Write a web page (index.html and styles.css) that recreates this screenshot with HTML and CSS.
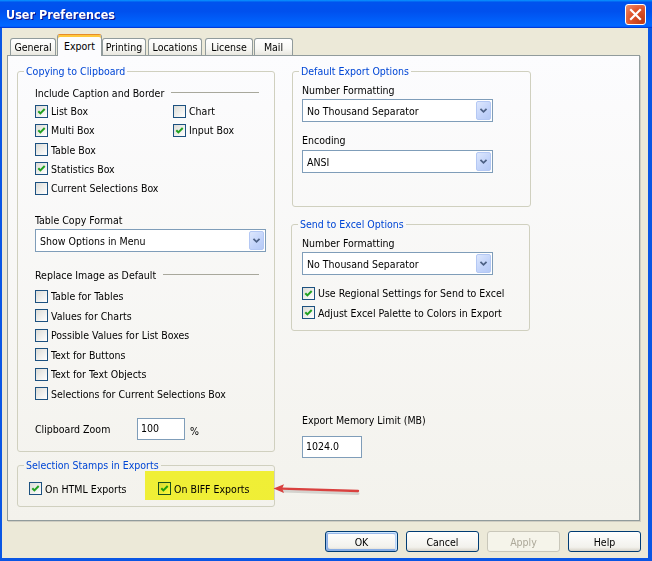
FILE: index.html
```html
<!DOCTYPE html>
<html>
<head>
<meta charset="utf-8">
<title>User Preferences</title>
<link rel="stylesheet" href="styles.css">
</head>
<body>
<div class="window">
  <div class="titlebar">
    <span class="title">User Preferences</span>
    <span class="close"><svg width="19" height="19" viewBox="0 0 19 19"><path d="M5 5 L14 14 M14 5 L5 14" stroke="#fff" stroke-width="2.2" stroke-linecap="square"/></svg></span>
  </div>
  <div class="client">
    <div class="tabs">
      <div class="tab t-general">General</div>
      <div class="tab tab-active t-export">Export</div>
      <div class="tab t-printing">Printing</div>
      <div class="tab t-locations">Locations</div>
      <div class="tab t-license">License</div>
      <div class="tab t-mail">Mail</div>
    </div>
    <div class="panel">
      <div class="col-left">
        <fieldset class="group">
          <legend>Copying to Clipboard</legend>
          <div class="gbody gb-clip">
            <div class="heading"><span>Include Caption and Border</span><span class="rule"></span></div>
            <div class="grid grid-caption">
              <div class="cb"><span class="box"><svg width="11" height="11" viewBox="0 0 11 11"><path d="M2.3 5.2 L4.4 7.4 L8.7 3" fill="none" stroke="#21a121" stroke-width="2"/></svg></span><span>List Box</span></div>
              <div class="cb"><span class="box"></span><span>Chart</span></div>
              <div class="cb"><span class="box"><svg width="11" height="11" viewBox="0 0 11 11"><path d="M2.3 5.2 L4.4 7.4 L8.7 3" fill="none" stroke="#21a121" stroke-width="2"/></svg></span><span>Multi Box</span></div>
              <div class="cb"><span class="box"><svg width="11" height="11" viewBox="0 0 11 11"><path d="M2.3 5.2 L4.4 7.4 L8.7 3" fill="none" stroke="#21a121" stroke-width="2"/></svg></span><span>Input Box</span></div>
              <div class="cb span2"><span class="box"></span><span>Table Box</span></div>
              <div class="cb span2"><span class="box"><svg width="11" height="11" viewBox="0 0 11 11"><path d="M2.3 5.2 L4.4 7.4 L8.7 3" fill="none" stroke="#21a121" stroke-width="2"/></svg></span><span>Statistics Box</span></div>
              <div class="cb span2"><span class="box"></span><span>Current Selections Box</span></div>
            </div>
            <div class="label lbl-copy">Table Copy Format</div>
            <div class="select sel-copy"><span>Show Options in Menu</span><span class="drop"><svg width="15" height="19" viewBox="0 0 15 19"><path d="M4 7.5 L7.5 11 L11 7.5" fill="none" stroke="#4d6185" stroke-width="2"/></svg></span></div>
            <div class="heading hd-replace"><span>Replace Image as Default</span><span class="rule"></span></div>
            <div class="grid grid-replace">
              <div class="cb"><span class="box"></span><span>Table for Tables</span></div>
              <div class="cb"><span class="box"></span><span>Values for Charts</span></div>
              <div class="cb"><span class="box"></span><span>Possible Values for List Boxes</span></div>
              <div class="cb"><span class="box"></span><span>Text for Buttons</span></div>
              <div class="cb"><span class="box"></span><span>Text for Text Objects</span></div>
              <div class="cb"><span class="box"></span><span>Selections for Current Selections Box</span></div>
            </div>
            <div class="zoomrow">
              <span class="zoomlbl">Clipboard Zoom</span>
              <span class="tb tb-zoom">100</span>
              <span class="pct">%</span>
            </div>
          </div>
        </fieldset>
        <fieldset class="group g-stamp">
          <legend>Selection Stamps in Exports</legend>
          <div class="gbody gb-stamp">
            <div class="grid grid-stamp">
              <div class="cb"><span class="box"><svg width="11" height="11" viewBox="0 0 11 11"><path d="M2.3 5.2 L4.4 7.4 L8.7 3" fill="none" stroke="#21a121" stroke-width="2"/></svg></span><span>On HTML Exports</span></div>
              <div class="cb"><span class="box"><svg width="11" height="11" viewBox="0 0 11 11"><path d="M2.3 5.2 L4.4 7.4 L8.7 3" fill="none" stroke="#21a121" stroke-width="2"/></svg></span><span>On BIFF Exports</span></div>
            </div>
          </div>
        </fieldset>
      </div>
      <div class="col-right">
        <fieldset class="group g-deo">
          <legend>Default Export Options</legend>
          <div class="gbody gb-deo">
            <div class="label">Number Formatting</div>
            <div class="select sel-r"><span>No Thousand Separator</span><span class="drop"><svg width="15" height="19" viewBox="0 0 15 19"><path d="M4 7.5 L7.5 11 L11 7.5" fill="none" stroke="#4d6185" stroke-width="2"/></svg></span></div>
            <div class="label lbl-enc">Encoding</div>
            <div class="select sel-r sel-enc"><span>ANSI</span><span class="drop"><svg width="15" height="19" viewBox="0 0 15 19"><path d="M4 7.5 L7.5 11 L11 7.5" fill="none" stroke="#4d6185" stroke-width="2"/></svg></span></div>
          </div>
        </fieldset>
        <fieldset class="group g-ste">
          <legend>Send to Excel Options</legend>
          <div class="gbody gb-ste">
            <div class="label">Number Formatting</div>
            <div class="select sel-r"><span>No Thousand Separator</span><span class="drop"><svg width="15" height="19" viewBox="0 0 15 19"><path d="M4 7.5 L7.5 11 L11 7.5" fill="none" stroke="#4d6185" stroke-width="2"/></svg></span></div>
            <div class="grid grid-ste">
              <div class="cb"><span class="box"><svg width="11" height="11" viewBox="0 0 11 11"><path d="M2.3 5.2 L4.4 7.4 L8.7 3" fill="none" stroke="#21a121" stroke-width="2"/></svg></span><span>Use Regional Settings for Send to Excel</span></div>
              <div class="cb"><span class="box"><svg width="11" height="11" viewBox="0 0 11 11"><path d="M2.3 5.2 L4.4 7.4 L8.7 3" fill="none" stroke="#21a121" stroke-width="2"/></svg></span><span>Adjust Excel Palette to Colors in Export</span></div>
            </div>
          </div>
        </fieldset>
        <div class="label lbl-mem">Export Memory Limit (MB)</div>
        <span class="tb tb-mem">1024.0</span>
      </div>
      <div class="highlight"></div>
      <svg class="arrow" width="100" height="16" viewBox="0 0 100 16">
        <path d="M13 11 L88 13.4" stroke="#000" stroke-opacity=".13" stroke-width="3" stroke-linecap="round"/>
        <path d="M12 8.6 L88 11" stroke="#d9413f" stroke-width="2.4" stroke-linecap="round"/>
        <path d="M3.5 8.5 L14 4.2 L12.2 8.6 L14 12.9 Z" fill="#d9413f"/>
      </svg>
    </div>
    <div class="buttons">
      <div class="btn btn-default">OK</div>
      <div class="btn">Cancel</div>
      <div class="btn btn-disabled">Apply</div>
      <div class="btn">Help</div>
    </div>
  </div>
</div>
</body>
</html>
```

FILE: styles.css
```css
* { box-sizing: border-box; }
html, body { margin: 0; padding: 0; }
body {
  width: 652px;
  height: 561px;
  overflow: hidden;
  font-family: "DejaVu Sans Condensed", "Liberation Sans", Arial, sans-serif;
  font-size: 10.5px;
  color: #000;
  background: #ece9d8;
}
.window {
  width: 652px;
  height: 561px;
  display: flex;
  flex-direction: column;
  background: #ece9d8;
}
.titlebar {
  height: 28px;
  flex: none;
  display: flex;
  align-items: center;
  justify-content: space-between;
  padding: 0 6px 0 6px;
  background: linear-gradient(180deg, #0997ff, #0053ee 8%, #0050ee 40%, #0066ff 88%, #0066ff 93%, #005bff 95%, #003dd7 96%, #003dd7);
}
.title {
  color: #fff;
  font-size: 12.5px;
  font-weight: bold;
  text-shadow: 1px 1px 0 #0f1089;
}
.close {
  width: 21px;
  height: 21px;
  border: 1px solid #fff;
  border-radius: 3px;
  background: radial-gradient(circle at 85% 85%, #c13c16 0%, #e0552c 55%, #ec8766 92%, #f7b9a3 100%);
  display: flex;
  align-items: center;
  justify-content: center;
}
.client {
  flex: 1;
  display: flex;
  flex-direction: column;
  border-style: solid;
  border-color: #0a56e4;
  border-width: 0 4px 3px 2px;
  padding: 6px 8px 0 5px;
}
.tabs {
  height: 21px;
  flex: none;
  display: flex;
  align-items: flex-end;
  padding-left: 3px;
}
.tab {
  height: 17px;
  display: flex;
  align-items: center;
  justify-content: center;
  white-space: nowrap;
  border: 1px solid #919b9c;
  border-bottom: 0;
  border-radius: 3px 3px 0 0;
  background: linear-gradient(#ffffff, #f7f7f4 60%, #e9e7df);
}
.tab-active {
  height: 22px;
  margin-bottom: -1px;
  position: relative;
  z-index: 1;
  background: #fcfcfe;
  border-top: 1px solid #e68b2c;
  box-shadow: inset 0 2px 0 #ffc83c;
}
.t-general { width: 46px; margin-right: 1px; }
.t-export { width: 45px; }
.t-printing { width: 44px; margin-right: 2px; }
.t-locations { width: 54px; margin-right: 3px; }
.t-license { width: 48px; margin-right: 1px; }
.t-mail { width: 39px; }

.panel {
  height: 466px;
  flex: none;
  position: relative;
  display: flex;
  border: 1px solid #919b9c;
  box-shadow: 1px 1px 0 #cfcdc2;
  background: linear-gradient(#fcfcfe, #f3f2ec);
  padding: 9px 0 0 9px;
}
.col-left { width: 258px; display: flex; flex-direction: column; }
.col-right { width: 240px; margin-left: 16px; display: flex; flex-direction: column; }

.group {
  margin: 0;
  padding: 0;
  min-width: 0;
  border: 1px solid #d0d0bf;
  border-radius: 3px;
}
.group legend {
  margin-left: 6px;
  padding: 0 2px;
  line-height: 13px;
  height: 13px;
  color: #0046d5;
}
.gb-clip { padding: 7px 15px 11px 17px; }
.g-stamp { margin-top: 7px; }
.gb-stamp { padding: 6.9px 0 8px 11px; }
.g-deo { margin-left: 1px; width: 239px; }
.gb-deo { padding: 5px 0 33px 9px; }
.g-ste { margin-top: 11px; width: 239px; }
.gb-ste { padding: 5.3px 0 7px 10px; }

.heading {
  height: 15px;
  display: flex;
  align-items: center;
}
.rule {
  flex: 1;
  height: 1px;
  margin-left: 7px;
  background: #a8a89c;
}
.hd-replace { margin-top: 15px; }

.grid { display: grid; }
.grid-caption { margin-top: 1.4px; grid-template-columns: 138px 1fr; grid-auto-rows: 19.25px; }
.span2 { grid-column: 1 / 3; }
.grid-replace { margin-top: 4.25px; grid-auto-rows: 19.5px; }
.grid-stamp { grid-template-columns: 129px 1fr; grid-auto-rows: 19.25px; }
.grid-ste { margin-top: 8.45px; grid-auto-rows: 19.5px; }

.cb {
  display: flex;
  align-items: center;
  white-space: nowrap;
}
.box {
  width: 13px;
  height: 13px;
  flex: none;
  margin-right: 3px;
  border: 1px solid #1c5180;
  background: linear-gradient(135deg, #dcdcd7, #ffffff);
  display: flex;
}

.label { height: 14px; line-height: 14px; white-space: nowrap; }
.lbl-copy { margin-top: 15.35px; }
.lbl-enc { margin-top: 11px; }
.lbl-mem { margin-top: 82.25px; margin-left: 11px; }

.select {
  height: 23px;
  display: flex;
  align-items: center;
  justify-content: space-between;
  border: 1px solid #7f9db9;
  background: #fff;
  padding: 1px 1px 1px 4px;
}
.sel-copy { width: 231px; margin-top: 2.5px; }
.sel-r { width: 191px; margin-top: 2px; }
.sel-enc { margin-top: 3px; }
.drop {
  width: 15px;
  height: 100%;
  border: 1px solid #b4c8f4;
  border-radius: 2px;
  background: linear-gradient(135deg, #dde7fd, #c2d3fa 60%, #b6caf6);
  display: flex;
  align-items: center;
  justify-content: center;
}

.zoomrow {
  margin-top: 14.25px;
  height: 22px;
  display: flex;
  align-items: center;
}
.zoomlbl { width: 102px; }
.tb {
  display: block;
  height: 22px;
  border: 1px solid #7f9db9;
  background: #fff;
  padding: 2px 3px 0 3px;
  line-height: 14px;
}
.tb-zoom { width: 48px; }
.pct { margin-left: 5px; margin-top: 4px; }
.tb-mem { width: 60px; margin-top: 9px; margin-left: 11px; }

.highlight {
  position: absolute;
  left: 137px;
  top: 415px;
  width: 129px;
  height: 29px;
  background: #fbfb3a;
  mix-blend-mode: multiply;
}
.arrow {
  position: absolute;
  left: 262px;
  top: 424px;
}

.buttons {
  display: flex;
  justify-content: flex-end;
  gap: 8px;
  margin-top: 10px;
  margin-right: -1px;
}
.btn {
  width: 73px;
  height: 21px;
  display: flex;
  align-items: center;
  justify-content: center;
  border: 1px solid #003c74;
  border-radius: 3px;
  background: linear-gradient(#ffffff, #f2f1ec 80%, #d8d3c8);
}
.btn-default {
  box-shadow: inset -1px 1px #cee7ff, inset 1px 2px #98b8ea, inset -2px 2px #bcd4f6, inset 1px -1px #89ade4, inset 2px -2px #89ade4;
}
.btn-disabled {
  border-color: #c9c7ba;
  background: #f5f4ea;
  color: #aca899;
}
```
